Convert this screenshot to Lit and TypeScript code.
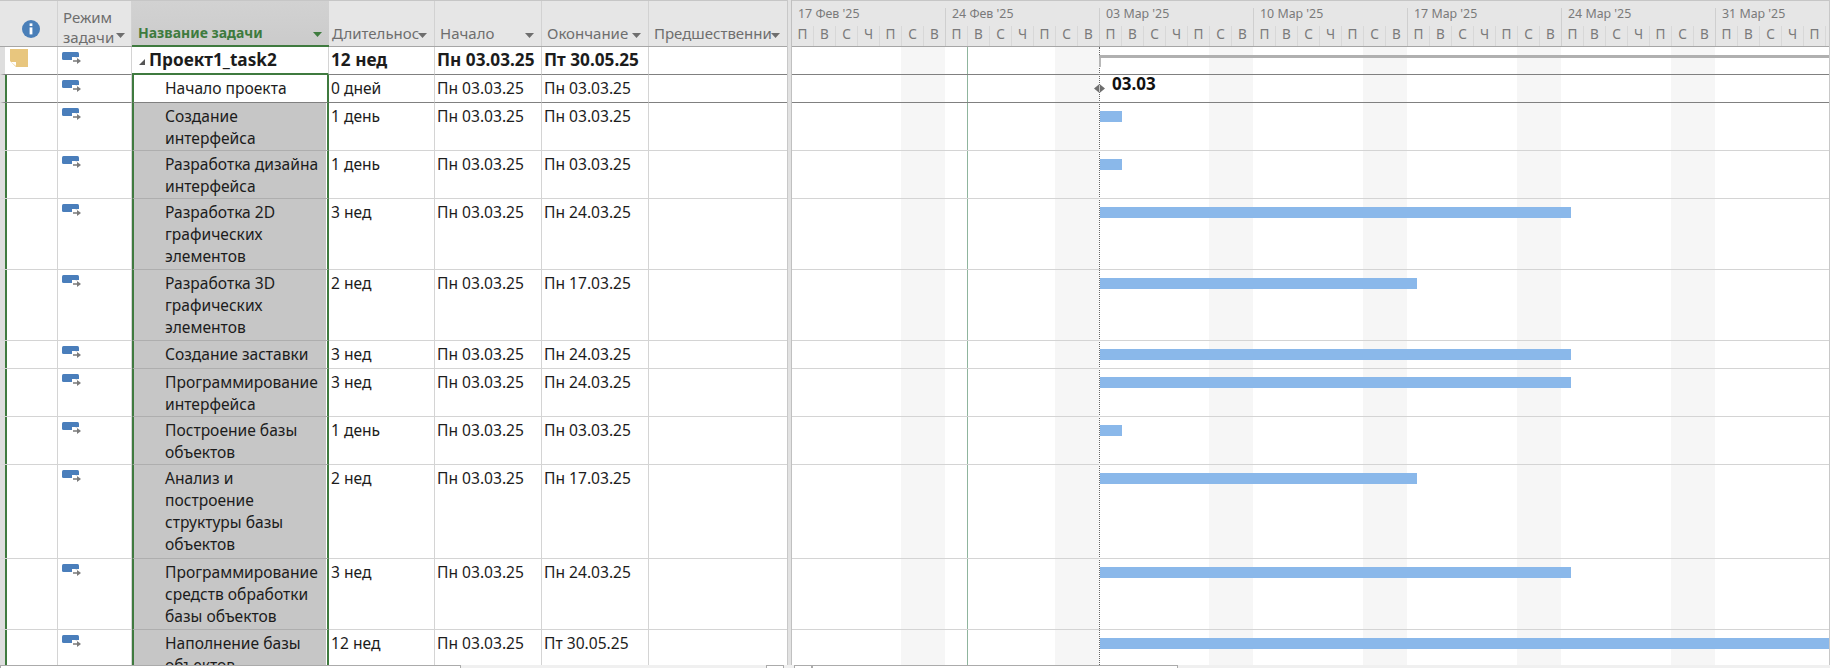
import { LitElement, html, css, svg } from 'lit';
import { customElement } from 'lit/decorators.js';
import { map } from 'lit/directives/map.js';

type Task = {
  name: string;
  dur: string;
  start: string;
  end: string;
  height: number;
  bar: number;
};

const TASKS: Task[] = [
  { name: 'Создание\nинтерфейса', dur: '1 день', start: 'Пн 03.03.25', end: 'Пн 03.03.25', height: 48, bar: 22 },
  { name: 'Разработка дизайна\nинтерфейса', dur: '1 день', start: 'Пн 03.03.25', end: 'Пн 03.03.25', height: 48, bar: 22 },
  { name: 'Разработка 2D\nграфических\nэлементов', dur: '3 нед', start: 'Пн 03.03.25', end: 'Пн 24.03.25', height: 71, bar: 471 },
  { name: 'Разработка 3D\nграфических\nэлементов', dur: '2 нед', start: 'Пн 03.03.25', end: 'Пн 17.03.25', height: 71, bar: 317 },
  { name: 'Создание заставки', dur: '3 нед', start: 'Пн 03.03.25', end: 'Пн 24.03.25', height: 28, bar: 471 },
  { name: 'Программирование\nинтерфейса', dur: '3 нед', start: 'Пн 03.03.25', end: 'Пн 24.03.25', height: 48, bar: 471 },
  { name: 'Построение базы\nобъектов', dur: '1 день', start: 'Пн 03.03.25', end: 'Пн 03.03.25', height: 48, bar: 22 },
  { name: 'Анализ и\nпостроение\nструктуры базы\nобъектов', dur: '2 нед', start: 'Пн 03.03.25', end: 'Пн 17.03.25', height: 94, bar: 317 },
  { name: 'Программирование\nсредств обработки\nбазы объектов', dur: '3 нед', start: 'Пн 03.03.25', end: 'Пн 24.03.25', height: 71, bar: 471 },
  { name: 'Наполнение базы\nобъектов', dur: '12 нед', start: 'Пн 03.03.25', end: 'Пт 30.05.25', height: 71, bar: 730 },
];

const WEEKS = ["17 Фев '25", "24 Фев '25", "03 Мар '25", "10 Мар '25", "17 Мар '25", "24 Мар '25", "31 Мар '25"];
const DAYS = ['П', 'В', 'С', 'Ч', 'П', 'С', 'В'];
const WEEK_W = 154;
const BAR_X = 308; // 03 Mar, from the left edge of the chart

const modeIcon = html`<svg class="mode" width="20" height="13" viewBox="0 0 20 13">
  <rect x="0" y="0" width="17" height="8" rx="1.5" fill="#4a7ebb"></rect>
  <path d="M10 5h9v8h-9z" fill="#fff"></path>
  <path d="M14.5 5.6v-.4M11 9h5" stroke="#7a7a7a" stroke-width="1.7" fill="none"></path>
  <path d="M15 6l4 3-4 3z" fill="#7a7a7a"></path>
</svg>`;

const noteIcon = svg`<svg class="note" width="18" height="18" viewBox="0 0 18 18">
  <path d="M0 0h18v18H6L0 12z" fill="#e8c67e"></path>
  <path d="M1 13h5v4z" fill="#fff"></path>
</svg>`;

const infoIcon = html`<svg width="18" height="18" viewBox="0 0 18 18">
  <circle cx="9" cy="9" r="9" fill="#4a7fb8"></circle>
  <rect x="7.6" y="3.4" width="2.8" height="2.6" fill="#fff"></rect>
  <rect x="7.6" y="7.4" width="2.8" height="7" fill="#fff"></rect>
</svg>`;

const arrow = html`<svg class="arrow" width="9" height="5" viewBox="0 0 9 5"><path d="M0 0h9L4.5 5z"></path></svg>`;

@customElement('app-root')
export class AppRoot extends LitElement {
  static styles = css`
    :host {
      display: block;
      width: 1830px;
      height: 668px;
      overflow: hidden;
      font-family: 'Noto Sans', sans-serif;
      font-size: 15.6px;
      color: #1c1c1c;
      background: #fff;
    }
    .main {
      display: flex;
      height: 665px;
      overflow: hidden;
    }
    .table {
      flex: none;
      width: 787px;
      overflow: hidden;
    }
    .splitter {
      flex: none;
      width: 5px;
      box-sizing: border-box;
      background: #e2e2e2;
      border-left: 1px solid #c8c8c8;
      border-right: 1px solid #c0c0c0;
    }
    .row {
      display: grid;
      grid-template-columns: 58px 74px 197px 106px 107px 107px 138px;
      box-sizing: border-box;
    }
    .head {
      height: 47px;
      background: #e6e6e6;
      border-top: 1px solid #c6c6c6;
      border-bottom: 1px solid #a6a6a6;
      color: #6e6e6e;
      font-size: 15px;
      line-height: 20px;
    }
    .head > div {
      display: flex;
      align-items: flex-end;
      box-sizing: border-box;
      padding: 0 5px 3px 5px;
      border-right: 1px solid #d2d2d2;
      white-space: nowrap;
      overflow: hidden;
      position: relative;
    }
    .head .info {
      align-items: flex-start;
      justify-content: center;
      padding: 19px 0 0 0;
      border-left: 5px solid #e6e6e6;
    }
    .head .mode-h {
      white-space: pre-line;
      display: block;
      padding-top: 6px;
    }
    .head .dur-h {
      padding-left: 3px;
    }
    .head .last-h {
      border-right: 0;
    }
    .head .name-h {
      background: linear-gradient(#d2d2d2, #cbcbcb);
      color: #3e7b3e;
      font-size: 14px;
      font-weight: 700;
      border-bottom: 2px solid #3f7a3f;
      border-right: 0;
      padding-bottom: 2px;
      padding-left: 6px;
      margin-bottom: -1px;
    }
    .arrow {
      position: absolute;
      right: 7px;
      bottom: 8px;
      fill: #6e6e6e;
    }
    .mode-h .arrow {
      right: 6px;
    }
    .name-h .arrow {
      fill: #3e7b3e;
    }
    .cell {
      box-sizing: border-box;
      padding: 2px 2px 0 2px;
      border-right: 1px solid #d4d4d4;
      border-bottom: 1px solid #d4d4d4;
      line-height: 22px;
      white-space: pre-line;
      overflow: hidden;
    }
    .plain {
      border-right: 0;
    }
    .cell.gutter {
      border-left: 5px solid #dedede;
      padding: 0;
    }
    .selected .gutter {
      box-shadow: inset 2px 0 0 #3f7a3f;
    }
    .cell.mode-c {
      padding: 5px 0 0 4px;
    }
    .mode {
      display: block;
    }
    .note {
      display: block;
      margin: 2px 0 0 5px;
    }
    .cell.name {
      padding-left: 31px;
      border-left: 2px solid #3f7a3f;
      border-right: 2px solid #3f7a3f;
      background: #c6c6c6;
      box-shadow: inset -1px 0 0 #fff;
      border-bottom-color: #aeaeae;
    }
    .summary {
      font-weight: 700;
      font-size: 17.2px;
    }
    .summary .cell,
    .milestone .cell {
      border-bottom-color: #808080;
    }
    .summary .cell.name {
      display: flex;
      align-items: flex-start;
      gap: 4px;
      padding-left: 7px;
      background: #fff;
      box-shadow: none;
      border-left: 0;
      border-right: 1px solid #d4d4d4;
      border-bottom: 2px solid #3f7a3f;
    }
    .toggle {
      flex: none;
      margin-top: 10px;
    }
    .milestone .cell.name {
      background: #fff;
      box-shadow: none;
    }

    .gantt {
      flex: 1;
      min-width: 0;
      overflow: hidden;
      border-right: 1px solid #c8c8c8;
    }
    .timescale {
      display: flex;
      height: 47px;
      box-sizing: border-box;
      background: #e6e6e6;
      border-top: 1px solid #c6c6c6;
      border-bottom: 1px solid #a6a6a6;
      color: #7a7a7a;
      font-size: 12.4px;
      overflow: hidden;
    }
    .week {
      flex: none;
      width: 154px;
      box-sizing: border-box;
      position: relative;
    }
    .week::after {
      content: '';
      position: absolute;
      right: 0;
      top: 7px;
      bottom: 0;
      width: 1px;
      background: #cfcfcf;
    }
    .week-label {
      height: 25px;
      padding-left: 6px;
      line-height: 26px;
      white-space: nowrap;
    }
    .days {
      display: flex;
      font-size: 13.5px;
    }
    .day {
      flex: none;
      width: 22px;
      box-sizing: border-box;
      height: 20px;
      line-height: 16px;
      text-align: center;
      border-right: 1px solid #d8d8d8;
    }
    .chart {
      position: relative;
      height: 618px;
    }
    .weekend {
      position: absolute;
      top: 0;
      bottom: 0;
      width: 44px;
      background: #f6f6f6;
    }
    .today {
      position: absolute;
      left: 175px;
      top: 0;
      bottom: 0;
      width: 1px;
      background: #8fb59d;
    }
    .start-line {
      position: absolute;
      left: 307px;
      top: 0;
      bottom: 0;
      border-left: 1px dotted #666;
    }
    .g-row {
      display: flow-root;
      position: relative;
      box-sizing: border-box;
      border-bottom: 1px solid #d4d4d4;
    }
    .g-row.dark {
      border-bottom-color: #808080;
    }
    .bar {
      height: 11px;
      margin-top: 8px;
      background: #8ab8ea;
    }
    .sum-bar {
      height: 3px;
      margin: 8px 0 0 307px;
      background: #b0b0b0;
    }
    .sum-bar-cap {
      width: 2px;
      height: 9px;
      margin-left: 307px;
      box-sizing: border-box;
      border: 1px solid #b8b8b8;
      border-top: 0;
      border-radius: 0 0 1px 1px;
    }
    .ms {
      display: flex;
      margin-left: 302px;
    }
    .ms svg {
      flex: none;
      margin-top: 9px;
    }
    .ms span {
      margin-left: 7px;
      font-weight: 700;
      font-size: 17px;
      line-height: 18px;
      color: #111;
    }

    .scrolls {
      display: flex;
      height: 3px;
      background: #f0f0f0;
    }
    .thumb {
      flex: none;
      box-sizing: border-box;
      height: 3px;
      border: 1px solid #ababab;
      border-bottom: 0;
      background: #fff;
    }
    .gap {
      flex: none;
    }
  `;

  private _taskRow(t: Task) {
    return html`<div class="row selected" style="height:${t.height}px">
      <div class="cell gutter"></div>
      <div class="cell mode-c">${modeIcon}</div>
      <div class="cell name">${t.name}</div>
      <div class="cell">${t.dur}</div>
      <div class="cell">${t.start}</div>
      <div class="cell">${t.end}</div>
      <div class="cell plain"></div>
    </div>`;
  }

  render() {
    return html`
      <div class="main">
        <div class="table">
          <div class="row head">
            <div class="info">${infoIcon}</div>
            <div class="mode-h">Режим\nзадачи${arrow}</div>
            <div class="name-h">Название задачи${arrow}</div>
            <div class="dur-h">Длительнос${arrow}</div>
            <div>Начало${arrow}</div>
            <div>Окончание${arrow}</div>
            <div class="last-h">Предшественни${arrow}</div>
          </div>
          <div class="row summary" style="height:28px">
            <div class="cell gutter">${noteIcon}</div>
            <div class="cell mode-c">${modeIcon}</div>
            <div class="cell name">
              <svg class="toggle" width="6" height="6" viewBox="0 0 6 6"><path d="M6 0v6H0z" fill="#555"></path></svg>
              <span>Проект1_task2</span>
            </div>
            <div class="cell">12 нед</div>
            <div class="cell">Пн 03.03.25</div>
            <div class="cell">Пт 30.05.25</div>
            <div class="cell plain"></div>
          </div>
          <div class="row selected milestone" style="height:28px">
            <div class="cell gutter"></div>
            <div class="cell mode-c">${modeIcon}</div>
            <div class="cell name">Начало проекта</div>
            <div class="cell">0 дней</div>
            <div class="cell">Пн 03.03.25</div>
            <div class="cell">Пн 03.03.25</div>
            <div class="cell plain"></div>
          </div>
          ${map(TASKS, (t) => this._taskRow(t))}
        </div>
        <div class="splitter"></div>
        <div class="gantt">
          <div class="timescale">
            ${map(WEEKS, (w, i) => html`<div class="week">
              <div class="week-label">${w}</div>
              <div class="days">
                ${map(i === 6 ? DAYS.slice(0, 5) : DAYS, (d) => html`<div class="day">${d}</div>`)}
              </div>
            </div>`)}
          </div>
          <div class="chart">
            ${map(WEEKS.slice(0, 6), (_, i) => html`<div class="weekend" style="left:${109 + i * WEEK_W}px"></div>`)}
            <div class="today"></div>
            <div class="start-line"></div>
            <div class="g-row dark" style="height:28px">
              <div class="sum-bar"></div>
              <div class="sum-bar-cap"></div>
            </div>
            <div class="g-row dark" style="height:28px">
              <div class="ms">
                <svg width="11" height="9" viewBox="0 0 11 9"><path d="M5.5 0L11 4.5 5.5 9 0 4.5z" fill="#6e6e6e"></path><path d="M5.5 1v7" stroke="#c4c4c4" stroke-width="1"></path></svg>
                <span>03.03</span>
              </div>
            </div>
            ${map(TASKS, (t) => html`<div class="g-row" style="height:${t.height}px">
              <div class="bar" style="margin-left:${BAR_X}px;width:${t.bar}px"></div>
            </div>`)}
          </div>
        </div>
      </div>
      <div class="scrolls">
        <div class="thumb" style="width:461px"></div>
        <div class="gap" style="width:305px"></div>
        <div class="thumb" style="width:18px"></div>
        <div class="gap" style="width:10px"></div>
        <div class="thumb" style="width:18px"></div>
        <div class="thumb" style="width:366px"></div>
      </div>
    `;
  }
}
